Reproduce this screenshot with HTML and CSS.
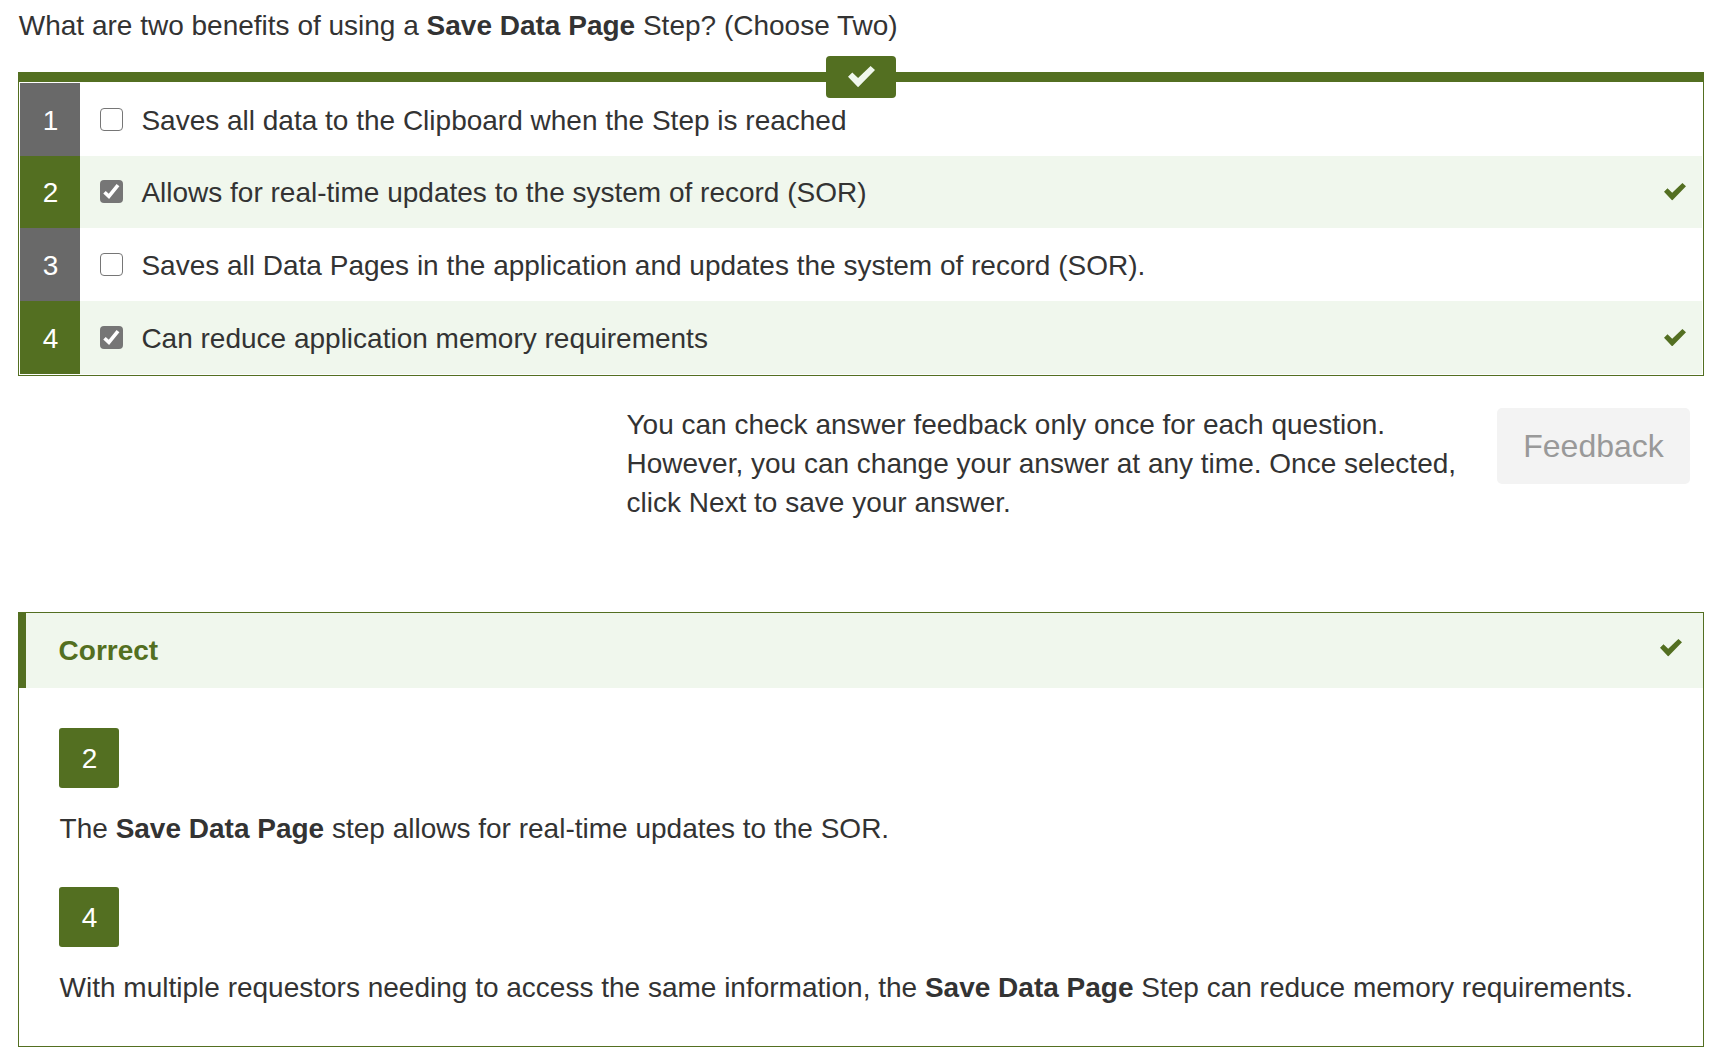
FILE: index.html
```
<!DOCTYPE html>
<html lang="en">
<head>
<meta charset="utf-8">
<title>Question</title>
<link rel="stylesheet" href="styles.css">
</head>
<body>
<svg class="defs" aria-hidden="true">
  <symbol id="check" viewBox="0 0 22 17.5"><path d="M0 8.7 3.5 5.2 8.2 9.8 18.4 0 22 3.3 8.2 17.4Z"/></symbol>
</svg>
<main class="page">
  <p class="question">What are two benefits of using a <b>Save Data Page</b> Step? (Choose Two)</p>

  <section class="answers">
    <div class="status"><svg class="status-check"><use href="#check"/></svg></div>
    <div class="answer">
      <span class="number">1</span>
      <span class="box"></span>
      <span class="label">Saves all data to the Clipboard when the Step is reached</span>
    </div>
    <div class="answer answer-correct answer-short">
      <span class="number">2</span>
      <span class="box box-on"><svg class="box-check" viewBox="0 0 23 23"><path d="M4.5 12.2 8.9 16.4 18 5.1"/></svg></span>
      <span class="label">Allows for real-time updates to the system of record (SOR)</span>
      <svg class="check"><use href="#check"/></svg>
    </div>
    <div class="answer">
      <span class="number">3</span>
      <span class="box"></span>
      <span class="label">Saves all Data Pages in the application and updates the system of record (SOR).</span>
    </div>
    <div class="answer answer-correct">
      <span class="number">4</span>
      <span class="box box-on"><svg class="box-check" viewBox="0 0 23 23"><path d="M4.5 12.2 8.9 16.4 18 5.1"/></svg></span>
      <span class="label">Can reduce application memory requirements</span>
      <svg class="check"><use href="#check"/></svg>
    </div>
  </section>

  <section class="actions">
    <p class="note">You can check answer feedback only once for each question. However, you can change your answer at any time. Once selected, click Next to save your answer.</p>
    <button class="feedback" disabled>Feedback</button>
  </section>

  <section class="result">
    <header class="result-head">
      <h2 class="result-title">Correct</h2>
      <svg class="check"><use href="#check"/></svg>
    </header>
    <div class="result-body">
      <span class="badge">2</span>
      <p class="reason">The <b>Save Data Page</b> step allows for real-time updates to the SOR.</p>
      <span class="badge">4</span>
      <p class="reason">With multiple requestors needing to access the same information, the <b>Save Data Page</b> Step can reduce memory requirements.</p>
    </div>
  </section>
</main>
</body>
</html>
```
FILE: styles.css
```
* { box-sizing: border-box; }
body {
  margin: 0;
  background: #fff;
  color: #333;
  font: 28px/39px "Liberation Sans", Arial, sans-serif;
}
p, h2 { margin: 0; }
.defs { display: none; }
.page { padding: 6px 10px 0 18px; }
.question { height: 66px; padding-left: 0.8px; white-space: nowrap; }

.answers {
  position: relative;
  border: 1px solid #536f21;
  border-top-width: 10px;
  padding: 1px;
}
.status {
  position: absolute;
  top: -26px;
  left: 807px;
  width: 70px;
  height: 42px;
  border-radius: 4px;
  background: #536f21;
}
.status-check { display: block; width: 27px; height: 21.5px; margin: 10px 0 0 21.5px; fill: #f0f7ed; }
.answer { display: flex; align-items: center; height: 73px; }
.answer-short { height: 72px; }
.answer-correct { background: #f0f7ed; }
.number {
  align-self: stretch;
  display: flex;
  align-items: center;
  justify-content: center;
  width: 60px;
  padding: 1px 0 0 1px;
  background: #696969;
  color: #fff;
}
.answer-correct .number { background: #536f21; }
.box {
  width: 23px;
  height: 23px;
  margin: 0 18.4px 1px 20px;
  border: 1.5px solid #767676;
  border-radius: 4px;
  background: #fff;
}
.box-on { border: 0; background: #767676; }
.box-check { display: block; fill: none; stroke: #fff; stroke-width: 3.6; }
.label { flex: 1; padding-top: 1px; white-space: nowrap; }
.check { width: 22px; height: 17.5px; margin: 0 16px 0.5px 0; fill: #536f21; }

.actions {
  display: flex;
  justify-content: flex-end;
  height: 236px;
  padding: 29px 14px 0 0;
}
.note { width: 870.5px; padding-right: 35.5px; }
.feedback {
  width: 193px;
  height: 76px;
  margin-top: 3px;
  border: 0;
  border-radius: 5px;
  background: #f3f3f3;
  color: #999;
  font: 32px "Liberation Sans", Arial, sans-serif;
}

.result { height: 435px; border: 1px solid #536f21; }
.result-head {
  display: flex;
  align-items: center;
  justify-content: space-between;
  height: 75px;
  margin-left: -1px;
  padding: 0 20.7px 0 32.6px;
  border-left: 8px solid #536f21;
  background: #f0f7ed;
}
.result-head .check { margin: 0 0 5.5px; }
.result-title { font-size: 28px; color: #536f21; }
.result-body { padding: 40px 0 0 40px; }
.badge {
  display: flex;
  align-items: center;
  justify-content: center;
  width: 60px;
  height: 60px;
  padding-left: 1px;
  border-radius: 3px;
  background: #536f21;
  color: #fff;
}
.reason { height: 99px; padding: 21px 0 0 0.6px; white-space: nowrap; }
```
